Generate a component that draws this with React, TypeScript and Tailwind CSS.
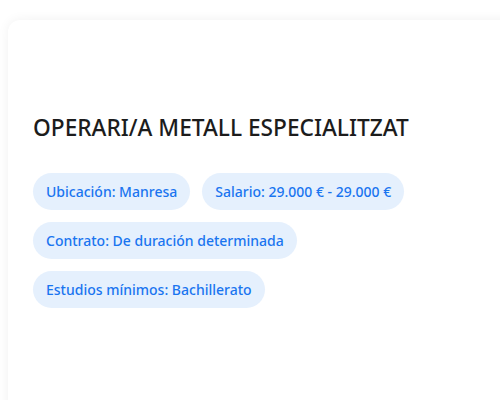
import React from 'react';

const tags = [
  'Ubicación: Manresa',
  'Salario: 29.000 € - 29.000 €',
  'Contrato: De duración determinada',
  'Estudios mínimos: Bachillerato',
];

export default function App() {
  return (
    <div className="w-[500px] h-[400px] overflow-hidden bg-white pt-5 pl-2" style={{ fontFamily: '"Noto Sans", "Open Sans", sans-serif' }}>
      {/* job offer card */}
      <div className="w-[520px] h-[420px] bg-white rounded-xl shadow-[0_0_12px_rgba(0,0,0,0.06)] px-[25px] pt-[92px]">
        <h1 className="text-[22.7px] leading-8 font-medium text-[#1c1c1c]">OPERARI/A METALL ESPECIALITZAT</h1>
        <div className="mt-[29px] flex flex-wrap gap-3 w-[400px]">
          {tags.map((t) => (
            <span key={t} className="h-[37px] px-[13px] flex items-center rounded-full bg-[#e5f0fd] text-[14px] font-medium text-[#1a75f0]">
              {t}
            </span>
          ))}
        </div>
      </div>
    </div>
  );
}
